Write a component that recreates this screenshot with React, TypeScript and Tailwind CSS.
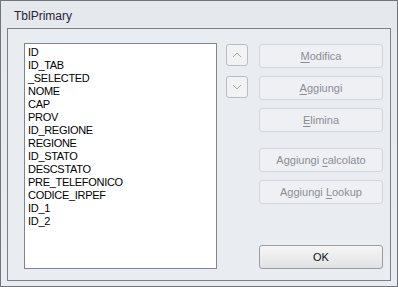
// TblPrimary dialog — list of fields with side buttons

const fields = [
  "ID",
  "ID_TAB",
  "_SELECTED",
  "NOME",
  "CAP",
  "PROV",
  "ID_REGIONE",
  "REGIONE",
  "ID_STATO",
  "DESCSTATO",
  "PRE_TELEFONICO",
  "CODICE_IRPEF",
  "ID_1",
  "ID_2",
]

function SideButton({ pre, key1, post, disabled = true, className = "" }: { pre?: string; key1: string; post?: string; disabled?: boolean; className?: string }) {
  return (
    <div
      className={
        "h-[24px] w-[124px] flex items-center justify-center rounded-[3px] border text-[11px] " +
        (disabled
          ? "border-[#d3d6da] bg-[#eef0f3] text-[#8a8e94] "
          : "border-[#9a9da2] bg-gradient-to-b from-[#f6f6f6] to-[#e1e2e4] text-[#111] ") +
        className
      }
    >
      <span>
        {pre}
        <span className="underline underline-offset-2">{key1}</span>
        {post}
      </span>
    </div>
  )
}

function ArrowButton({ up }: { up?: boolean }) {
  return (
    <div className="h-[22px] w-[22px] flex items-center justify-center rounded-[3px] border border-[#b9bcc1] bg-[#f0f2f4]">
      <svg width="10" height="6" viewBox="0 0 10 6">
        {up ? (
          <polyline points="1,5 5,1 9,5" fill="none" stroke="#a3a7ac" strokeWidth="1" />
        ) : (
          <polyline points="1,1 5,5 9,1" fill="none" stroke="#a3a7ac" strokeWidth="1" />
        )}
      </svg>
    </div>
  )
}

export default function App() {
  return (
    <div
      className="w-[398px] h-[287px] border border-[#6f757d] bg-gradient-to-b from-[#e5e8ec] to-[#e9ecf0] flex flex-col px-[6px] pb-[5px]"
      style={{ fontFamily: '"Liberation Sans", Arial, sans-serif' }}
    >
      {/* title bar */}
      <div className="h-[27px] flex items-center pl-[7px] pt-[2px] text-[12px] text-[#2a2338]">TblPrimary</div>

      {/* inner panel */}
      <div className="flex-1 border border-[#7c8188] bg-[#e9ecf0] flex pl-[16px] pt-[14px] pb-[11px] pr-[7px]">
        {/* listbox */}
        <div className="w-[193px] h-[226px] border border-[#80848b] bg-white pl-[3px] pt-[2px] text-[11px] leading-[13px] tracking-[-0.3px] text-black">
          {fields.map((f) => (
            <div key={f}>{f}</div>
          ))}
        </div>

        {/* up/down */}
        <div className="ml-[9px] pt-[1px] flex flex-col gap-[10px]">
          <ArrowButton up />
          <ArrowButton />
        </div>

        {/* buttons */}
        <div className="ml-[11px] pt-[1px] flex flex-col gap-[8px] h-[226px]">
          <SideButton key1="M" post="odifica" />
          <SideButton key1="A" post="ggiungi" />
          <SideButton key1="E" post="limina" />
          <SideButton pre="Aggiungi " key1="c" post="alcolato" className="mt-[8px]" />
          <SideButton pre="Aggiungi " key1="L" post="ookup" />
          <SideButton key1="" post="OK" disabled={false} className="mt-auto" />
        </div>
      </div>
    </div>
  )
}
